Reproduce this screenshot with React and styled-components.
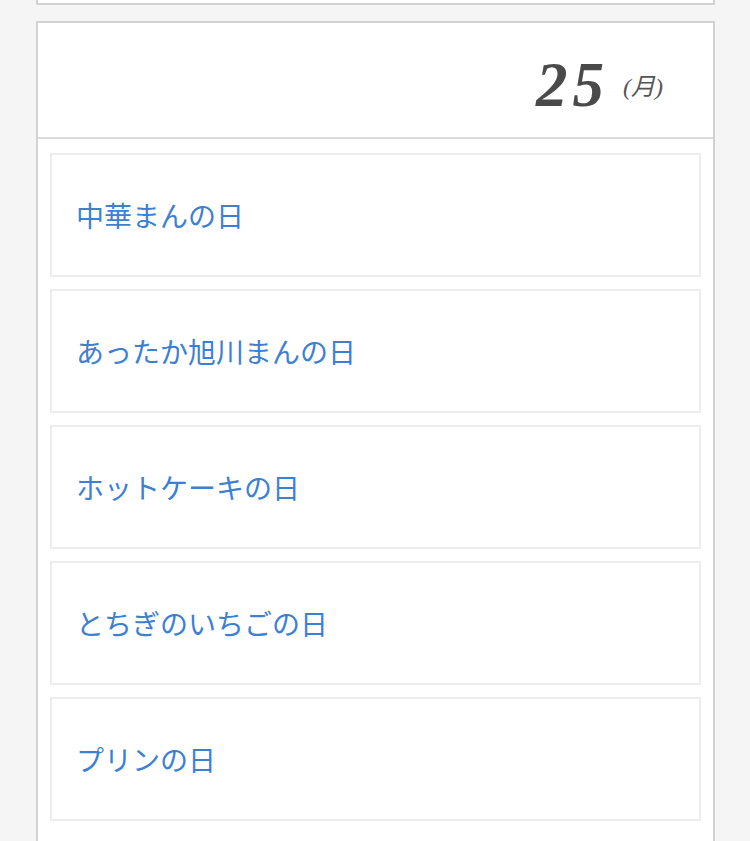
import React from "react";
import styled, { createGlobalStyle } from "styled-components";

const GlobalStyle = createGlobalStyle`
  html, body {
    margin: 0;
    padding: 0;
    background: #f5f5f5;
  }
  body {
    font-family: "Noto Sans CJK JP", "Noto Sans", sans-serif;
  }
`;

const Page = styled.div`
  display: flex;
  flex-direction: column;
  gap: 16px;
  padding: 0 35px 0 36px;
`;

const PrevCardEdge = styled.div`
  height: 3px;
  background: #fff;
  border: 2px solid #d2d2d2;
  border-top: none;
`;

const DayCard = styled.section`
  background: #fff;
  border: 2px solid #d2d2d2;
`;

const DayHeader = styled.header`
  height: 114px;
  display: flex;
  align-items: center;
  justify-content: flex-end;
  padding-right: 50px;
  border-bottom: 2px solid #dcdcdc;
  font-family: "Liberation Serif", "Noto Serif CJK JP", serif;
  font-style: italic;
  color: #4a4a4a;
`;

const DayNumber = styled.span`
  font-size: 63px;
  font-weight: 700;
  line-height: 1;
  margin-top: 10px;
  letter-spacing: 5px;
`;

const Weekday = styled.span`
  font-size: 24px;
  margin-left: 14px;
  margin-top: 8px;
  color: #555;
  font-family: "Liberation Serif", "Noto Sans CJK JP", serif;
`;

const EventList = styled.ul`
  list-style: none;
  margin: 0;
  padding: 14px 12px 40px;
  display: flex;
  flex-direction: column;
  gap: 12px;
`;

const EventItem = styled.li`
  height: 120px;
  border: 2px solid #ececec;
  display: flex;
  align-items: center;
  padding-left: 24px;
`;

const EventLink = styled.a`
  color: #3d7fd1;
  font-size: 28px;
  text-decoration: none;
  font-family: "Noto Sans CJK JP", sans-serif;
`;

const events = [
  "中華まんの日",
  "あったか旭川まんの日",
  "ホットケーキの日",
  "とちぎのいちごの日",
  "プリンの日",
];

export default function App() {
  return (
    <>
      <GlobalStyle />
      <Page>
        <PrevCardEdge />
        <DayCard>
          <DayHeader>
            <DayNumber>25</DayNumber>
            <Weekday>(月)</Weekday>
          </DayHeader>
          <EventList>
            {events.map((name) => (
              <EventItem key={name}>
                <EventLink href="#">{name}</EventLink>
              </EventItem>
            ))}
          </EventList>
        </DayCard>
      </Page>
    </>
  );
}
